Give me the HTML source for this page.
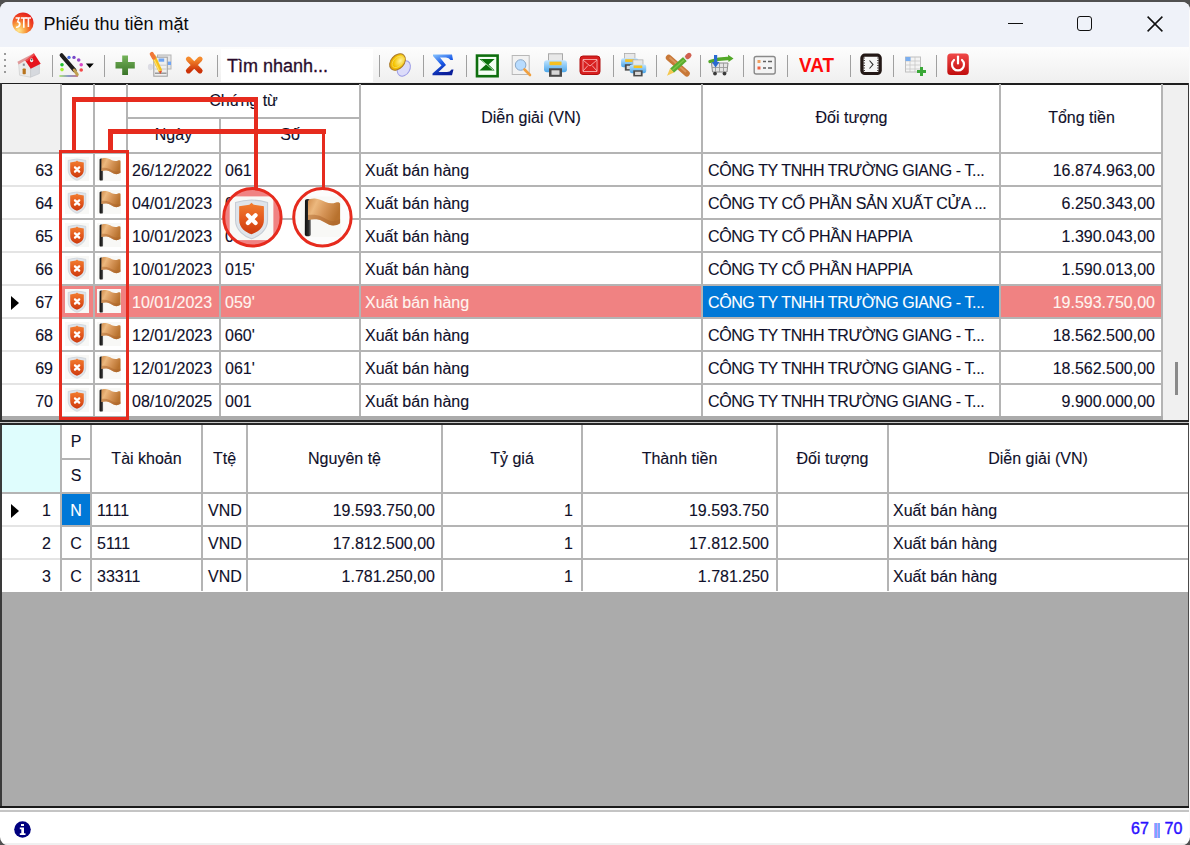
<!DOCTYPE html><html><head><meta charset="utf-8"><style>
*{box-sizing:border-box}
body{margin:0;width:1190px;height:845px;overflow:hidden;background:#505050;position:relative;font-family:"Liberation Sans",sans-serif;color:#10102a}
.a{position:absolute}
.win{position:absolute;left:0;top:0;width:1190px;height:845px;background:#fff;clip-path:inset(2px 0 0 0 round 8px)}
.t{position:absolute;white-space:nowrap;font-size:16px;line-height:33px;height:33px;-webkit-text-stroke:0.12px currentColor}
.r{text-align:right}
.c{text-align:center}
.hl{position:absolute;height:2px;background:#b4b4b4}
.vl{position:absolute;width:2px;background:#b4b4b4}
.sep{position:absolute;top:55px;width:1px;height:22px;background:#a0a0a0}
</style></head><body>
<div class="win">
<div class="a" style="left:0;top:0;width:1190px;height:47px;background:#eff2f9"></div>
<svg class="a" style="left:12px;top:12px" width="22" height="22" viewBox="0 0 22 22">
<defs><radialGradient id="lg" cx="0.3" cy="0.85" r="0.9"><stop offset="0" stop-color="#ffe890"/><stop offset="0.35" stop-color="#f8a040"/><stop offset="0.7" stop-color="#f04a22"/><stop offset="1" stop-color="#e41c1c"/></radialGradient></defs>
<circle cx="11" cy="11" r="10.6" fill="url(#lg)"/>
<path d="M3.6 5.2 H8.2 L6.4 9.2 C8.4 9.4 8.8 11 8.6 12.6 C8.3 15 6.6 16.2 3.8 16 L4.2 14.4 C5.8 14.5 6.8 13.6 6.8 12.3 C6.8 11 6 10.4 4.6 10.5 L6.1 6.7 H3.6 Z" fill="#fff"/>
<path d="M8.8 5.2 H14.6 V6.8 H12.6 V15.8 H11 V6.8 H8.8 Z" fill="#fff"/>
<path d="M13.6 5.2 H19 V6.8 H17.2 V15 H15.6 V6.8 H13.6 Z" fill="#fff" opacity="0.95"/>
</svg>
<div class="t" style="left:43.5px;top:7px;font-size:18px;line-height:34px;color:#0a0a0a;-webkit-text-stroke:0">Phiếu thu tiền mặt</div>
<div class="a" style="left:1008px;top:23px;width:15px;height:1.3px;background:#111"></div>
<div class="a" style="left:1077px;top:16px;width:15px;height:15px;border:1.6px solid #111;border-radius:3px"></div>
<svg class="a" style="left:1147px;top:16px" width="16" height="16" viewBox="0 0 16 16"><path d="M0.6 0.6L15.4 15.4M15.4 0.6L0.6 15.4" stroke="#111" stroke-width="1.5"/></svg>
<div class="a" style="left:0;top:47px;width:1190px;height:36px;background:linear-gradient(#fdfdfd,#efefef)"></div>
<div class="a" style="left:4px;top:53px;width:2px;height:2px;background:#9a9a9a"></div>
<div class="a" style="left:4px;top:59px;width:2px;height:2px;background:#9a9a9a"></div>
<div class="a" style="left:4px;top:65px;width:2px;height:2px;background:#9a9a9a"></div>
<div class="a" style="left:4px;top:71px;width:2px;height:2px;background:#9a9a9a"></div>
<div class="sep" style="left:51.6px"></div>
<div class="sep" style="left:104.2px"></div>
<div class="sep" style="left:216.6px"></div>
<div class="sep" style="left:378.7px"></div>
<div class="sep" style="left:422.6px"></div>
<div class="sep" style="left:466.1px"></div>
<div class="sep" style="left:612.9px"></div>
<div class="sep" style="left:656.4px"></div>
<div class="sep" style="left:699.8px"></div>
<div class="sep" style="left:743.2px"></div>
<div class="sep" style="left:786.9px"></div>
<div class="sep" style="left:849.9px"></div>
<div class="sep" style="left:893.3px"></div>
<div class="sep" style="left:936.4px"></div>
<svg class="a" style="left:0;top:0" width="1190" height="84" viewBox="0 0 1190 84">
<defs>
<linearGradient id="gplus" x1="0" y1="0" x2="0" y2="1"><stop offset="0" stop-color="#74b35a"/><stop offset="1" stop-color="#3a7428"/></linearGradient>
<linearGradient id="gx" x1="0" y1="0" x2="0" y2="1"><stop offset="0" stop-color="#f58a2c"/><stop offset="1" stop-color="#cc3208"/></linearGradient>
<linearGradient id="gsig" x1="0" y1="0" x2="0.4" y2="1"><stop offset="0" stop-color="#8cc8ff"/><stop offset="0.5" stop-color="#1a5ae8"/><stop offset="1" stop-color="#0a1e9a"/></linearGradient>
<radialGradient id="gcoin" cx="0.6" cy="0.35" r="0.7"><stop offset="0" stop-color="#fff3a0"/><stop offset="0.6" stop-color="#f5c400"/><stop offset="1" stop-color="#e2a000"/></radialGradient>
<linearGradient id="gprn" x1="0" y1="0" x2="0" y2="1"><stop offset="0" stop-color="#bfe4ff"/><stop offset="1" stop-color="#4aa6ea"/></linearGradient>
<linearGradient id="gpow" x1="0" y1="0" x2="0" y2="1"><stop offset="0" stop-color="#f04848"/><stop offset="1" stop-color="#c00c0c"/></linearGradient>
<linearGradient id="groof" x1="0" y1="0" x2="1" y2="0"><stop offset="0" stop-color="#d89090"/><stop offset="0.5" stop-color="#e23a3a"/><stop offset="1" stop-color="#e8101c"/></linearGradient>
<g id="printer">
<rect x="5" y="0.5" width="14" height="8" fill="#e8e8e8" stroke="#a8a8a8" stroke-width="1"/>
<rect x="0.5" y="7" width="23" height="12" rx="3" fill="url(#gprn)"/>
<rect x="6" y="8.3" width="12" height="3.6" fill="#f5c020"/>
<rect x="5.5" y="15" width="13" height="8.5" fill="#4a4a4a"/>
<rect x="8" y="17" width="8" height="4.5" fill="#d8d8d8"/>
</g>
</defs>
<!-- home -->
<path d="M18.6 63 L26 59 L30.6 67.2 L30.6 77.2 L19.6 75.2 Z" fill="#ebebeb" stroke="#c8c8c8" stroke-width="0.6"/>
<path d="M30.6 67.2 L39.4 63.2 L39.4 73.6 L30.6 77.2 Z" fill="#d6d9de" stroke="#bfc3c8" stroke-width="0.6"/>
<path d="M17.4 61.7 L33.9 53.2 L25.6 60.2 L18.6 64.4 Z" fill="#e09a9a"/>
<path d="M25.2 60.4 L33.9 53.2 L40.7 63.8 L30.7 68.8 Z" fill="#e6141e"/>
<path d="M25.2 60.4 L33.9 53.2 L35 55 L27 61.5 Z" fill="#f06a6a" opacity="0.6"/>
<ellipse cx="31.6" cy="60.2" rx="1.6" ry="2" fill="#f4f4f4"/>
<circle cx="31.6" cy="59.6" r="0.9" fill="#555"/>
<rect x="22.6" y="68.5" width="3.2" height="5.8" rx="0.8" fill="#b8741e"/>
<rect x="22.8" y="63.6" width="2" height="2.2" fill="#8a8e98"/>
<!-- pen w/ dots -->
<circle cx="62" cy="64.8" r="1.8" fill="#22c030"/>
<circle cx="62" cy="69.6" r="1.8" fill="#a8f030"/>
<circle cx="69" cy="57.4" r="1.7" fill="#4a70e0"/>
<circle cx="74" cy="57.4" r="1.7" fill="#7848c8"/>
<circle cx="78.7" cy="60" r="1.8" fill="#9848c8"/>
<circle cx="81.2" cy="64.8" r="1.8" fill="#d848c8"/>
<circle cx="81.2" cy="70" r="1.8" fill="#f44848"/>
<defs><linearGradient id="gpl" x1="0" y1="0" x2="1" y2="0"><stop offset="0" stop-color="#a0e060"/><stop offset="0.5" stop-color="#7080c0"/><stop offset="1" stop-color="#c06070"/></linearGradient></defs>
<rect x="59.4" y="75.2" width="18.5" height="1.6" fill="url(#gpl)"/>
<path d="M61.6 55.2 L74.6 70.4" stroke="#1e1e1e" stroke-width="4" stroke-linecap="round"/>
<path d="M74.2 70 L77.3 74.6" stroke="#c0a050" stroke-width="3" stroke-linecap="round"/>
<path d="M85.9 63.6 L93.8 63.6 L89.7 68.1 Z" fill="#000"/>
<!-- green plus -->
<path d="M122.2 55.6 H128 V61.9 H134.8 V68.6 H128 V74.9 H122.2 V68.6 H115.5 V61.9 H122.2 Z" fill="url(#gplus)"/>
<!-- edit table -->
<ellipse cx="150.5" cy="67" rx="2.6" ry="3.2" fill="#dcdce4"/>
<rect x="157.5" y="55" width="13.5" height="14" fill="#e6e6e6" stroke="#b4b4b4" stroke-width="1"/>
<rect x="164.5" y="61.6" width="6.5" height="3.4" fill="#6ea4f4"/>
<rect x="153.8" y="57.2" width="13.5" height="19" fill="#efefef" stroke="#a4a4a4" stroke-width="1.1"/>
<rect x="158.6" y="58.5" width="5.6" height="3.2" fill="#6ea4f4"/>
<path d="M155 65.2 H166.5 M155 69 H166.5" stroke="#c4c4c4" stroke-width="0.9"/>
<path d="M155 73.2 H166.5" stroke="#9a9a9a" stroke-width="1.6"/>
<path d="M153.2 55.4 L160.4 71" stroke="#f6c21a" stroke-width="4" stroke-linecap="butt"/>
<path d="M152.4 55.8 L159.4 71.2" stroke="#ffe070" stroke-width="1.2"/>
<path d="M151.8 54 L153.8 57.6" stroke="#f07838" stroke-width="4.2" stroke-linecap="round"/>
<path d="M158.6 71.6 L160.6 74 L162.2 70.6 Z" fill="#e05030"/>
<!-- orange X -->
<path d="M188.5 59.2 L200 70.8 M200 59.2 L188.5 70.8" stroke="url(#gx)" stroke-width="5.2" stroke-linecap="round"/>
<!-- coin -->
<ellipse cx="403.8" cy="68.4" rx="6" ry="8.2" fill="#dcdcfa" stroke="#9c9ce6" stroke-width="1" transform="rotate(30 403.8 68.4)"/>
<ellipse cx="397.5" cy="62" rx="6.6" ry="9.3" fill="url(#gcoin)" stroke="#a87a30" stroke-width="1" transform="rotate(42 397.5 62)"/>
<ellipse cx="397.5" cy="62" rx="4.2" ry="6.6" fill="none" stroke="#f8e070" stroke-width="0.8" opacity="0.8" transform="rotate(42 397.5 62)"/>
<!-- sigma -->
<path d="M433 54.5 H452 L453 60 H450.5 Q449 57.5 446 57.5 H440 L446 65 L438.5 72 H447 Q450 72 451.5 69.5 H453.5 L452 75.2 H432.5 V73.5 L441.5 65.5 L433 56 Z" fill="url(#gsig)"/>
<!-- excel -->
<rect x="477" y="55.6" width="20.6" height="20.6" fill="#f4fff4" stroke="#0e6e0e" stroke-width="2.6"/>
<path d="M479.4 59 L494.6 59 L488.6 64.4 L494.6 70.4 L479.4 70.4 L486 64.4 Z" fill="#0a700a"/>
<path d="M481.5 60 L493 70" stroke="#b8e8b8" stroke-width="0.9"/>
<!-- magnifier -->
<rect x="512.2" y="55.5" width="17" height="19" fill="#f2f2f2" stroke="#b8b8b8" stroke-width="1"/>
<circle cx="520.6" cy="65" r="5.3" fill="#b8dcff" stroke="#8aa8c8" stroke-width="1"/>
<path d="M524.5 69.5 L530 75" stroke="#f0a040" stroke-width="2.6" stroke-linecap="round"/>
<!-- printer -->
<use href="#printer" transform="translate(543.5,53.3)"/>
<!-- red mail -->
<rect x="580" y="56" width="20" height="18.5" rx="3" fill="#d82020" stroke="#b01010" stroke-width="1"/>
<path d="M583 60 L590 66 L597 60 M583 71 L588 65.5 M597 71 L592 65.5 M583 59.5 V71.5 H597 V59.5 Z" fill="none" stroke="#f8b0b0" stroke-width="0.9"/>
<!-- two printers -->
<use href="#printer" transform="translate(620.7,53) scale(0.75)"/>
<use href="#printer" transform="translate(629.3,59.5) scale(0.72)"/>
<!-- pencil & ruler -->
<path d="M668.8 57.8 L686.8 73.6" stroke="#c87838" stroke-width="6" stroke-linecap="round"/>
<path d="M669.5 57.5 L686 72" stroke="#e0a068" stroke-width="2" opacity="0.7"/>
<path d="M685 59 L672 70.6" stroke="#5aac30" stroke-width="5.6"/>
<path d="M684 60 L672.5 70" stroke="#8ad050" stroke-width="1.6" opacity="0.7"/>
<path d="M687.6 56.6 L685 59" stroke="#e8e8e8" stroke-width="5.6"/>
<path d="M689 55.3 L687.6 56.6" stroke="#d06050" stroke-width="5" stroke-linecap="round"/>
<path d="M670 68.6 L674 72.6 L667 75.8 Z" fill="#f4c850"/>
<!-- cart -->
<path d="M711.5 63 H728 L727 72 H712.5 Z" fill="#e4e4e4" stroke="#8a8a8a" stroke-width="1"/>
<path d="M715.5 63 V72 M719.5 63 V72 M723.5 63 V72 M712 67.5 H727.5" stroke="#9a9a9a" stroke-width="0.9"/>
<circle cx="715" cy="73.6" r="1.9" fill="#3a3a3a"/><circle cx="724.5" cy="73.6" r="1.9" fill="#3a3a3a"/>
<path d="M710 61.5 Q720 58 729.5 58.5" stroke="#52a828" stroke-width="3.4" fill="none" stroke-linecap="round"/>
<path d="M728 54.8 L733.5 58.4 L728.5 62 Z" fill="#52a828"/>
<path d="M715.6 55 V63" stroke="#2a6ad0" stroke-width="3.2"/>
<path d="M711.8 62 L715.6 67.6 L719.4 62 Z" fill="#2a6ad0"/>
<!-- list -->
<rect x="754.2" y="56.5" width="21" height="17.5" rx="2" fill="#f4f4f4" stroke="#8a8a8a" stroke-width="1.4"/>
<rect x="757.5" y="60" width="3" height="3" fill="#f0a060"/><rect x="757.5" y="66.5" width="3" height="3" fill="#f06040"/>
<path d="M763 61.5 H766 M768 61.5 H772 M763 68 H766 M768 68 H772" stroke="#606060" stroke-width="1.4"/>
<!-- clock -->
<rect x="860.3" y="53.6" width="21.5" height="21.5" rx="4.5" fill="#231816"/>
<rect x="863.6" y="56.8" width="14.9" height="15.1" rx="1" fill="#f6f6f6"/>
<path d="M863.6 58 h1.2 M863.6 60.5 h1.2 M863.6 63 h1.2 M863.6 65.5 h1.2 M863.6 68 h1.2 M863.6 70.5 h1.2 M877.3 58 h1.2 M877.3 60.5 h1.2 M877.3 63 h1.2 M877.3 65.5 h1.2 M877.3 68 h1.2 M877.3 70.5 h1.2" stroke="#231816" stroke-width="1.2"/>
<path d="M869.5 60.5 L873 64.6 L869.5 68.5" fill="none" stroke="#303030" stroke-width="1.1"/>
<!-- table add -->
<rect x="905.5" y="57" width="15" height="15" fill="#f4f4f4" stroke="#c0c0c0" stroke-width="1"/>
<path d="M905.5 61 H920.5 M905.5 65 H920.5 M905.5 69 H920.5 M910 57 V72 M915 57 V72" stroke="#c8c8c8" stroke-width="0.8"/>
<rect x="905.5" y="57" width="5" height="4" fill="#7aaef0"/>
<path d="M921.5 67 V76 M917 71.5 H926" stroke="#3aa838" stroke-width="3"/>
<!-- power -->
<rect x="947.3" y="53.6" width="21.5" height="21.5" rx="3.5" fill="url(#gpow)"/>
<path d="M954 60 A6 6 0 1 0 962 60" fill="none" stroke="#fff" stroke-width="2.2" stroke-linecap="round"/>
<path d="M958 56.5 V63.5" stroke="#fff" stroke-width="2.2" stroke-linecap="round"/>
</svg>
<div class="a" style="left:221px;top:49px;width:152px;height:33px;background:#fff"></div>
<div class="t" style="left:227px;top:49.5px;font-size:18px;line-height:33px;color:#2a0c2c;-webkit-text-stroke:0.3px #2a0c2c">Tìm nhanh...</div>
<div class="t" style="left:798.5px;top:48px;font-size:20.5px;line-height:33px;color:#ff0a0a;font-weight:bold;-webkit-text-stroke:0;transform:scaleX(0.92);transform-origin:0 0">VAT</div>
<div class="a" style="left:0;top:83px;width:1189px;height:2px;background:#1e1e1e"></div>
<div class="a" style="left:0;top:83px;width:1.5px;height:339px;background:#333"></div>
<div class="a" style="left:1188px;top:83px;width:1px;height:339px;background:#3a3a3a"></div>
<div class="a" style="left:2px;top:84px;width:59px;height:68px;background:#f0f0f0"></div>
<div class="a" style="left:1163px;top:85px;width:25px;height:335px;background:#f0f0f0"></div>
<div class="a" style="left:1175px;top:362px;width:3px;height:33px;background:#8a8a8a"></div>
<div class="a" style="left:2px;top:416px;width:1161px;height:4px;background:#ababab"></div>
<div class="a" style="left:0;top:420px;width:1190px;height:2px;background:#262626"></div>
<div class="a" style="left:0;top:422px;width:1190px;height:1px;background:#c8c8c8"></div>
<div class="a" style="left:0;top:423px;width:1190px;height:2px;background:#262626"></div>
<svg width="0" height="0" style="position:absolute"><defs>
<linearGradient id="sg" x1="0" y1="0" x2="0" y2="1"><stop offset="0" stop-color="#f27e30"/><stop offset="0.5" stop-color="#e45a1e"/><stop offset="1" stop-color="#cc3a0e"/></linearGradient>
<linearGradient id="fg" x1="0" y1="0" x2="1" y2="0.4"><stop offset="0" stop-color="#d08c4c"/><stop offset="0.28" stop-color="#ecb87e"/><stop offset="0.6" stop-color="#d69558"/><stop offset="1" stop-color="#b8722e"/></linearGradient>
<linearGradient id="pg" x1="0" y1="0" x2="1" y2="0"><stop offset="0" stop-color="#0e0e0e"/><stop offset="0.6" stop-color="#2a2a2a"/><stop offset="1" stop-color="#707070"/></linearGradient>
<g id="shield">
<rect x="0" y="0" width="24" height="24" fill="#f8f8f6"/>
<path d="M3.2 3.4 Q12 0.6 20.8 3.4 L20.8 13 C20.8 18.8 15.6 22.2 12 23.3 C8.4 22.2 3.2 18.8 3.2 13 Z" fill="#dfe4ea" stroke="#c6ccd4" stroke-width="0.6"/>
<path d="M5.2 5.4 L10.8 4.6 L12 3.5 L13.2 4.6 L18.8 5.4 L18.8 13 C18.8 17.4 15.2 19.8 12 20.8 C8.8 19.8 5.2 17.4 5.2 13 Z" fill="url(#sg)"/>
<path d="M10 10.4 L14.2 14.6 M14.2 10.4 L10 14.6" stroke="#fff" stroke-width="2.3" stroke-linecap="round"/>
</g>
<g id="flag">
<rect x="0" y="0" width="24" height="24" fill="#f8f8f6"/>
<path d="M2.6 2.6 Q2.6 1.4 4.3 1.4 Q6 1.4 6 2.6 L6.1 22.4 Q6.1 23.6 4.3 23.6 Q2.5 23.6 2.5 22.4 Z" fill="url(#pg)"/>
<path d="M4.4 2.6 C5 1.4 6.5 1 8.5 1.1 C11 1.2 12.5 2.2 14.8 3.2 C17 4.1 19 4.3 21 3.5 C22.2 3.1 23.5 3.3 23.5 4.4 L23.5 15.8 C21.6 17 19.5 17.6 17 16.7 C14.2 15.6 12.6 13.9 9.6 13.5 C7.6 13.3 6 13.5 4.4 14 Z" fill="url(#fg)"/>
<path d="M4.4 11 C7 10.6 10 10.8 12.6 12 C15 13.2 17 14.6 19.5 14.6 C21 14.6 22.4 14 23.5 13.4 L23.5 15.8 C21.6 17 19.5 17.6 17 16.7 C14.2 15.6 12.6 13.9 9.6 13.5 C7.6 13.3 6 13.5 4.4 14 Z" fill="#a8622a" opacity="0.45"/>
</g>
</defs></svg>
<div class="a" style="left:62px;top:285px;width:1100px;height:33px;background:#f08282"></div>
<div class="a" style="left:703px;top:285px;width:297px;height:33px;background:#0078d7"></div>
<div class="vl" style="left:60px;top:84px;height:332px"></div>
<div class="vl" style="left:93px;top:84px;height:332px"></div>
<div class="vl" style="left:126px;top:84px;height:332px"></div>
<div class="vl" style="left:219px;top:117px;height:299px"></div>
<div class="vl" style="left:359px;top:84px;height:332px"></div>
<div class="vl" style="left:701px;top:84px;height:332px"></div>
<div class="vl" style="left:999px;top:84px;height:332px"></div>
<div class="vl" style="left:1161px;top:84px;height:332px"></div>
<div class="hl" style="left:127px;top:117px;width:233px"></div>
<div class="hl" style="left:2px;top:152px;width:1161px"></div>
<div class="hl" style="left:2px;top:185px;width:58px;background:#e4e4e4"></div>
<div class="hl" style="left:60px;top:185px;width:1103px"></div>
<div class="hl" style="left:2px;top:218px;width:58px;background:#e4e4e4"></div>
<div class="hl" style="left:60px;top:218px;width:1103px"></div>
<div class="hl" style="left:2px;top:251px;width:58px;background:#e4e4e4"></div>
<div class="hl" style="left:60px;top:251px;width:1103px"></div>
<div class="hl" style="left:2px;top:284px;width:58px;background:#e4e4e4"></div>
<div class="hl" style="left:60px;top:284px;width:1103px"></div>
<div class="hl" style="left:2px;top:317px;width:58px;background:#e4e4e4"></div>
<div class="hl" style="left:60px;top:317px;width:1103px"></div>
<div class="hl" style="left:2px;top:350px;width:58px;background:#e4e4e4"></div>
<div class="hl" style="left:60px;top:350px;width:1103px"></div>
<div class="hl" style="left:2px;top:383px;width:58px;background:#e4e4e4"></div>
<div class="hl" style="left:60px;top:383px;width:1103px"></div>
<div class="t c" style="left:127px;top:84px;width:233px;height:34px;line-height:34px;font-size:16px">Chứng từ</div>
<div class="t c" style="left:127px;top:118px;width:93px;height:34px;line-height:34px;font-size:16px">Ngày</div>
<div class="t c" style="left:220px;top:118px;width:140px;height:34px;line-height:34px;font-size:16px">Số</div>
<div class="t c" style="left:360px;top:84px;width:342px;height:68px;line-height:68px;font-size:16px">Diễn giải (VN)</div>
<div class="t c" style="left:702px;top:84px;width:299px;height:68px;line-height:68px;font-size:16px">Đối tượng</div>
<div class="t c" style="left:1001px;top:84px;width:161px;height:68px;line-height:68px;font-size:16px">Tổng tiền</div>
<svg class="a" style="left:65px;top:157px" width="24" height="24" viewBox="0 0 24 24"><use href="#shield"/></svg>
<svg class="a" style="left:97px;top:157px" width="24" height="24" viewBox="0 0 24 24"><use href="#flag"/></svg>
<div class="t r" style="left:2px;top:154px;width:51px;color:#10102a">63</div>
<div class="t" style="left:132px;top:154px;color:#10102a">26/12/2022</div>
<div class="t" style="left:225px;top:154px;color:#10102a">061</div>
<div class="t" style="left:365px;top:154px;color:#10102a">Xuất bán hàng</div>
<div class="t" style="left:708px;top:154px;color:#10102a;letter-spacing:-0.4px">CÔNG TY TNHH TRƯỜNG GIANG - T...</div>
<div class="t r" style="left:1002px;top:154px;width:153px;color:#10102a">16.874.963,00</div>
<svg class="a" style="left:65px;top:190px" width="24" height="24" viewBox="0 0 24 24"><use href="#shield"/></svg>
<svg class="a" style="left:97px;top:190px" width="24" height="24" viewBox="0 0 24 24"><use href="#flag"/></svg>
<div class="t r" style="left:2px;top:187px;width:51px;color:#10102a">64</div>
<div class="t" style="left:132px;top:187px;color:#10102a">04/01/2023</div>
<div class="t" style="left:225px;top:187px;color:#10102a">058'</div>
<div class="t" style="left:365px;top:187px;color:#10102a">Xuất bán hàng</div>
<div class="t" style="left:708px;top:187px;color:#10102a;letter-spacing:-0.4px">CÔNG TY CỔ PHẦN SẢN XUẤT CỬA ...</div>
<div class="t r" style="left:1002px;top:187px;width:153px;color:#10102a">6.250.343,00</div>
<svg class="a" style="left:65px;top:223px" width="24" height="24" viewBox="0 0 24 24"><use href="#shield"/></svg>
<svg class="a" style="left:97px;top:223px" width="24" height="24" viewBox="0 0 24 24"><use href="#flag"/></svg>
<div class="t r" style="left:2px;top:220px;width:51px;color:#10102a">65</div>
<div class="t" style="left:132px;top:220px;color:#10102a">10/01/2023</div>
<div class="t" style="left:225px;top:220px;color:#10102a">014'</div>
<div class="t" style="left:365px;top:220px;color:#10102a">Xuất bán hàng</div>
<div class="t" style="left:708px;top:220px;color:#10102a;letter-spacing:-0.4px">CÔNG TY CỔ PHẦN HAPPIA</div>
<div class="t r" style="left:1002px;top:220px;width:153px;color:#10102a">1.390.043,00</div>
<svg class="a" style="left:65px;top:256px" width="24" height="24" viewBox="0 0 24 24"><use href="#shield"/></svg>
<svg class="a" style="left:97px;top:256px" width="24" height="24" viewBox="0 0 24 24"><use href="#flag"/></svg>
<div class="t r" style="left:2px;top:253px;width:51px;color:#10102a">66</div>
<div class="t" style="left:132px;top:253px;color:#10102a">10/01/2023</div>
<div class="t" style="left:225px;top:253px;color:#10102a">015'</div>
<div class="t" style="left:365px;top:253px;color:#10102a">Xuất bán hàng</div>
<div class="t" style="left:708px;top:253px;color:#10102a;letter-spacing:-0.4px">CÔNG TY CỔ PHẦN HAPPIA</div>
<div class="t r" style="left:1002px;top:253px;width:153px;color:#10102a">1.590.013,00</div>
<svg class="a" style="left:11px;top:296px" width="8" height="14" viewBox="0 0 8 14"><path d="M0 0 L8 7 L0 14 Z" fill="#000"/></svg>
<svg class="a" style="left:65px;top:289px" width="24" height="24" viewBox="0 0 24 24"><use href="#shield"/></svg>
<svg class="a" style="left:97px;top:289px" width="24" height="24" viewBox="0 0 24 24"><use href="#flag"/></svg>
<div class="t r" style="left:2px;top:286px;width:51px;color:#10102a">67</div>
<div class="t" style="left:132px;top:286px;color:#fff5f0">10/01/2023</div>
<div class="t" style="left:225px;top:286px;color:#fff5f0">059'</div>
<div class="t" style="left:365px;top:286px;color:#fff5f0">Xuất bán hàng</div>
<div class="t" style="left:708px;top:286px;color:#fff;letter-spacing:-0.4px">CÔNG TY TNHH TRƯỜNG GIANG - T...</div>
<div class="t r" style="left:1002px;top:286px;width:153px;color:#fff5f0">19.593.750,00</div>
<svg class="a" style="left:65px;top:322px" width="24" height="24" viewBox="0 0 24 24"><use href="#shield"/></svg>
<svg class="a" style="left:97px;top:322px" width="24" height="24" viewBox="0 0 24 24"><use href="#flag"/></svg>
<div class="t r" style="left:2px;top:319px;width:51px;color:#10102a">68</div>
<div class="t" style="left:132px;top:319px;color:#10102a">12/01/2023</div>
<div class="t" style="left:225px;top:319px;color:#10102a">060'</div>
<div class="t" style="left:365px;top:319px;color:#10102a">Xuất bán hàng</div>
<div class="t" style="left:708px;top:319px;color:#10102a;letter-spacing:-0.4px">CÔNG TY TNHH TRƯỜNG GIANG - T...</div>
<div class="t r" style="left:1002px;top:319px;width:153px;color:#10102a">18.562.500,00</div>
<svg class="a" style="left:65px;top:355px" width="24" height="24" viewBox="0 0 24 24"><use href="#shield"/></svg>
<svg class="a" style="left:97px;top:355px" width="24" height="24" viewBox="0 0 24 24"><use href="#flag"/></svg>
<div class="t r" style="left:2px;top:352px;width:51px;color:#10102a">69</div>
<div class="t" style="left:132px;top:352px;color:#10102a">12/01/2023</div>
<div class="t" style="left:225px;top:352px;color:#10102a">061'</div>
<div class="t" style="left:365px;top:352px;color:#10102a">Xuất bán hàng</div>
<div class="t" style="left:708px;top:352px;color:#10102a;letter-spacing:-0.4px">CÔNG TY TNHH TRƯỜNG GIANG - T...</div>
<div class="t r" style="left:1002px;top:352px;width:153px;color:#10102a">18.562.500,00</div>
<svg class="a" style="left:65px;top:388px" width="24" height="24" viewBox="0 0 24 24"><use href="#shield"/></svg>
<svg class="a" style="left:97px;top:388px" width="24" height="24" viewBox="0 0 24 24"><use href="#flag"/></svg>
<div class="t r" style="left:2px;top:385px;width:51px;color:#10102a">70</div>
<div class="t" style="left:132px;top:385px;color:#10102a">08/10/2025</div>
<div class="t" style="left:225px;top:385px;color:#10102a">001</div>
<div class="t" style="left:365px;top:385px;color:#10102a">Xuất bán hàng</div>
<div class="t" style="left:708px;top:385px;color:#10102a;letter-spacing:-0.4px">CÔNG TY TNHH TRƯỜNG GIANG - T...</div>
<div class="t r" style="left:1002px;top:385px;width:153px;color:#10102a">9.900.000,00</div>
<div class="a" style="left:0;top:425px;width:1.5px;height:381px;background:#3a3a3a"></div>
<div class="a" style="left:1187.5px;top:425px;width:1.7px;height:381px;background:#4a4a4a"></div>
<div class="a" style="left:2px;top:425px;width:58px;height:67px;background:#dffdfd"></div>
<div class="a" style="left:62px;top:494px;width:28px;height:32px;background:#0078d7"></div>
<div class="vl" style="left:60px;top:425px;height:166px"></div>
<div class="vl" style="left:90px;top:425px;height:166px"></div>
<div class="vl" style="left:201px;top:425px;height:166px"></div>
<div class="vl" style="left:246px;top:425px;height:166px"></div>
<div class="vl" style="left:441px;top:425px;height:166px"></div>
<div class="vl" style="left:581px;top:425px;height:166px"></div>
<div class="vl" style="left:776px;top:425px;height:166px"></div>
<div class="vl" style="left:887px;top:425px;height:166px"></div>
<div class="hl" style="left:60px;top:458px;width:31px"></div>
<div class="hl" style="left:2px;top:492px;width:1186px"></div>
<div class="hl" style="left:2px;top:525px;width:58px;background:#e4e4e4"></div>
<div class="hl" style="left:60px;top:525px;width:1128px"></div>
<div class="hl" style="left:2px;top:558px;width:58px;background:#e4e4e4"></div>
<div class="hl" style="left:60px;top:558px;width:1128px"></div>
<div class="t c" style="left:61px;top:425px;width:30px;height:34px;line-height:34px">P</div>
<div class="t c" style="left:61px;top:459px;width:30px;height:34px;line-height:34px">S</div>
<div class="t c" style="left:91px;top:425px;width:111px;height:68px;line-height:68px">Tài khoản</div>
<div class="t c" style="left:202px;top:425px;width:45px;height:68px;line-height:68px">Ttệ</div>
<div class="t c" style="left:247px;top:425px;width:195px;height:68px;line-height:68px">Nguyên tệ</div>
<div class="t c" style="left:442px;top:425px;width:140px;height:68px;line-height:68px">Tỷ giá</div>
<div class="t c" style="left:582px;top:425px;width:195px;height:68px;line-height:68px">Thành tiền</div>
<div class="t c" style="left:777px;top:425px;width:111px;height:68px;line-height:68px">Đối tượng</div>
<div class="t c" style="left:888px;top:425px;width:300px;height:68px;line-height:68px">Diễn giải (VN)</div>
<svg class="a" style="left:11px;top:504px" width="8" height="14" viewBox="0 0 8 14"><path d="M0 0 L8 7 L0 14 Z" fill="#000"/></svg>
<div class="t r" style="left:2px;top:494px;width:49px">1</div>
<div class="t c" style="left:61px;top:494px;width:30px;color:#fff">N</div>
<div class="t" style="left:97px;top:494px">1111</div>
<div class="t" style="left:208px;top:494px">VND</div>
<div class="t r" style="left:247px;top:494px;width:188px">19.593.750,00</div>
<div class="t r" style="left:442px;top:494px;width:131px">1</div>
<div class="t r" style="left:582px;top:494px;width:187px">19.593.750</div>
<div class="t" style="left:893px;top:494px">Xuất bán hàng</div>
<div class="t r" style="left:2px;top:527px;width:49px">2</div>
<div class="t c" style="left:61px;top:527px;width:30px;color:#10102a">C</div>
<div class="t" style="left:97px;top:527px">5111</div>
<div class="t" style="left:208px;top:527px">VND</div>
<div class="t r" style="left:247px;top:527px;width:188px">17.812.500,00</div>
<div class="t r" style="left:442px;top:527px;width:131px">1</div>
<div class="t r" style="left:582px;top:527px;width:187px">17.812.500</div>
<div class="t" style="left:893px;top:527px">Xuất bán hàng</div>
<div class="t r" style="left:2px;top:560px;width:49px">3</div>
<div class="t c" style="left:61px;top:560px;width:30px;color:#10102a">C</div>
<div class="t" style="left:97px;top:560px">33311</div>
<div class="t" style="left:208px;top:560px">VND</div>
<div class="t r" style="left:247px;top:560px;width:188px">1.781.250,00</div>
<div class="t r" style="left:442px;top:560px;width:131px">1</div>
<div class="t r" style="left:582px;top:560px;width:187px">1.781.250</div>
<div class="t" style="left:893px;top:560px">Xuất bán hàng</div>
<div class="a" style="left:0;top:592px;width:1190px;height:214px;background:#ababab"></div>
<div class="a" style="left:0;top:591px;width:1.5px;height:215px;background:#3a3a3a"></div>
<div class="a" style="left:1187.5px;top:591px;width:1.7px;height:215px;background:#4a4a4a"></div>
<div class="a" style="left:1189.2px;top:591px;width:0.8px;height:215px;background:#f0f0f0"></div>
<div class="a" style="left:0;top:806px;width:1190px;height:2px;background:#1a1a1a"></div>
<div class="a" style="left:0;top:808px;width:1190px;height:2px;background:#f6f6f6"></div>
<div class="a" style="left:0;top:810px;width:1190px;height:2px;background:#c4c4c4"></div>
<div class="a" style="left:0;top:843px;width:1190px;height:2px;background:#f0f0f0"></div>
<svg class="a" style="left:14px;top:821px" width="17" height="17" viewBox="0 0 17 17"><circle cx="8.5" cy="8.5" r="8.3" fill="#00007f"/><rect x="7" y="3" width="3" height="2" fill="#fff"/><path d="M5.8 6.5 H10 V12.3 H11.5 V14 H5.8 V12.3 H7.3 V8.2 H5.8 Z" fill="#fff"/></svg>
<div class="t" style="left:1131px;top:812px;font-size:16px;-webkit-text-stroke:0.4px #2a10ff;color:#2a10ff;line-height:34px">67</div>
<div class="a" style="left:1154px;top:823px;width:6px;height:14.5px;background:linear-gradient(90deg,#d0a0ff 0,#d0a0ff 1.5px,#78a8ff 1.5px,#78a8ff 3px,#d0a0ff 3px,#d0a0ff 4.5px,#78a8ff 4.5px)"></div>
<div class="t" style="left:1164.5px;top:812px;font-size:16px;-webkit-text-stroke:0.4px #2a10ff;color:#2a10ff;line-height:34px">70</div>
<div class="a" style="left:1189px;top:10px;width:1px;height:826px;background:#fbfbfb"></div>
<div class="a" style="left:59px;top:150px;width:70px;height:3.2px;background:#e62b1e"></div>
<div class="a" style="left:59px;top:416.5px;width:70px;height:3.5px;background:#e62b1e"></div>
<div class="a" style="left:59px;top:150px;width:3.2px;height:270px;background:#e62b1e"></div>
<div class="a" style="left:125.8px;top:150px;width:3.2px;height:270px;background:#e62b1e"></div>
<div class="a" style="left:72px;top:97px;width:4px;height:53px;background:#e62b1e"></div>
<div class="a" style="left:72px;top:97px;width:185.6px;height:5px;background:#e62b1e"></div>
<div class="a" style="left:253.6px;top:97px;width:4px;height:91px;background:#e62b1e"></div>
<div class="a" style="left:108px;top:129px;width:4.5px;height:21px;background:#e62b1e"></div>
<div class="a" style="left:108px;top:129px;width:217.5px;height:5px;background:#e62b1e"></div>
<div class="a" style="left:321.7px;top:129px;width:3.8px;height:59px;background:#e62b1e"></div>
<svg class="a" style="left:220px;top:185px" width="66" height="66" viewBox="0 0 66 66">
<defs><clipPath id="c1"><circle cx="32.4" cy="32.3" r="29"/></clipPath></defs>
<g clip-path="url(#c1)"><rect width="66" height="66" fill="#f08282"/>
<g transform="translate(9.7,11.4) scale(1.82)"><use href="#shield"/></g></g>
<circle cx="32.4" cy="32.3" r="28.7" fill="none" stroke="#e62b1e" stroke-width="3"/></svg>
<svg class="a" style="left:290px;top:185px" width="66" height="66" viewBox="0 0 66 66">
<defs><clipPath id="c2"><circle cx="32.4" cy="32.3" r="29"/></clipPath></defs>
<g clip-path="url(#c2)"><rect width="66" height="66" fill="#fcfcfc"/>
<g transform="translate(10.6,11.6) scale(1.68)"><use href="#flag"/></g></g>
<circle cx="32.4" cy="32.3" r="28.7" fill="none" stroke="#e62b1e" stroke-width="3"/></svg>
</div></body></html>
